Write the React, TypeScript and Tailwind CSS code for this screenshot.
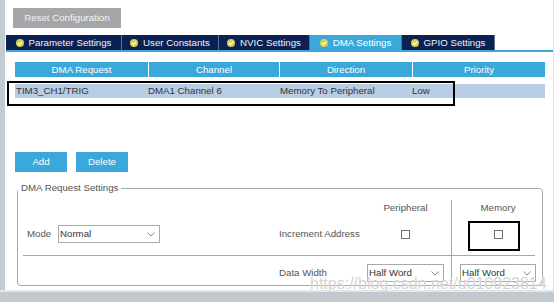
import React from "react";

// ── Small pieces ─────────────────────────────────────────────────────

const TABS = [
	{ label: "Parameter Settings", w: "w-[116px]", active: false },
	{ label: "User Constants", w: "w-[97px]", active: false },
	{ label: "NVIC Settings", w: "w-[91px]", active: false },
	{ label: "DMA Settings", w: "w-[92px]", active: true },
	{ label: "GPIO Settings", w: "w-[93px]", active: false },
];

function CheckDot() {
	return (
		<svg width="8" height="8" viewBox="0 0 8 8" className="shrink-0">
			<circle cx="4" cy="4" r="4" fill="#dad44b" />
			<path d="M2 4.1 L3.4 5.4 L6 2.8" stroke="#fff" strokeWidth="1.2" fill="none" />
		</svg>
	);
}

function Select({ value, w }: { value: string; w: string }) {
	return (
		<div className={`${w} flex h-[18px] items-center justify-between border border-[#a9a9a9] bg-white pl-[1px] pr-[4px] text-[#333]`}>
			<span>{value}</span>
			<svg width="8" height="5" viewBox="0 0 8 5">
				<path d="M0.5 0.5 L4 4 L7.5 0.5" stroke="#7a7a7a" strokeWidth="0.9" fill="none" />
			</svg>
		</div>
	);
}

function Checkbox() {
	return <div className="h-[9px] w-[9px] border border-[#707070] bg-white" />;
}

// ── Main Page ────────────────────────────────────────────────────────

export default function App() {
	return (
		<div className="relative flex h-[302px] w-[554px] flex-col overflow-hidden bg-white font-['Liberation_Sans',Arial,sans-serif] text-[9.7px] leading-[12px]">
			<div className="flex min-h-0 flex-1">
				{/* left frame */}
				<div className="w-[5px] bg-[#c3cbd0]" />

				<div className="relative flex flex-1 flex-col border-r border-[#dde2e5]">
					{/* Reset */}
					<div className="ml-[8px] mt-[8px] flex h-[20px] w-[108px] items-center justify-center bg-[#a3a7aa] text-[#f4f4f4]">
						Reset Configuration
					</div>

					{/* Tabs */}
					<div className="ml-[1px] mt-[7px] flex h-[15px]">
						{TABS.map((t) => (
							<div
								key={t.label}
								className={`${t.w} flex items-center justify-center gap-[5px] border-r border-[#5d6f8c] ${
									t.active ? "bg-[#3ba8db] text-white" : "bg-[#0b2153] text-[#eef2f8]"
								}`}
							>
								<CheckDot />
								<span>{t.label}</span>
							</div>
						))}
					</div>
					<div className="ml-[1px] h-[2px] bg-[#3aa8db]" />

					{/* Table */}
					<div className="ml-[10px] mt-[10px] flex h-[15px] gap-[1px] text-white">
						<div className="flex w-[133px] items-center justify-center bg-[#3aa8db]">DMA Request</div>
						<div className="flex w-[130px] items-center justify-center bg-[#3aa8db]">Channel</div>
						<div className="flex w-[132px] items-center justify-center bg-[#3aa8db]">Direction</div>
						<div className="flex w-[132px] items-center justify-center bg-[#3aa8db]">Priority</div>
					</div>
					<div className="ml-[10px] mt-[7px] flex h-[14px] w-[530px] items-center bg-[#b8cce4] text-[#333]">
						<div className="w-[133px] pl-[1px]">TIM3_CH1/TRIG</div>
						<div className="w-[132px]">DMA1 Channel 6</div>
						<div className="w-[132px]">Memory To Peripheral</div>
						<div>Low</div>
					</div>
					<div className="absolute left-[2px] top-[81px] h-[25px] w-[448px] border-2 border-black" />

					{/* Buttons */}
					<div className="ml-[10px] mt-[54px] flex gap-[9px] text-white">
						<div className="flex h-[20px] w-[52px] items-center justify-center bg-[#3aa8db]">Add</div>
						<div className="flex h-[20px] w-[52px] items-center justify-center bg-[#3aa8db]">Delete</div>
					</div>

					{/* DMA Request Settings */}
					<fieldset className="ml-[12px] mt-[10px] w-[526px] rounded-[4px] border border-[#a8a8a8] text-[#555]">
						<legend className="ml-[0px] pl-[3px] pr-[3px] leading-[12px]">DMA Request Settings</legend>

						<div className="mt-[6px] flex h-[16px]">
							<div className="flex w-[433px]">
								<div className="ml-[349px] flex w-[77px] items-center justify-center">Peripheral</div>
							</div>
							<div className="flex w-[91px] border-l border-[#8faad8]">
								<div className="ml-[8px] flex w-[76px] items-center justify-center">Memory</div>
							</div>
						</div>

						<div className="flex h-[39px]">
							<div className="flex w-[433px] pt-[9px]">
								<div className="flex h-[18px] w-[40px] items-center pl-[9px]">Mode</div>
								<Select value="Normal" w="w-[102px]" />
								<div className="ml-[119px] flex h-[18px] w-[88px] items-center">Increment Address</div>
								<div className="flex h-[18px] w-[77px] items-center justify-center">
									<Checkbox />
								</div>
							</div>
							<div className="relative flex w-[91px] border-l border-[#8faad8] pt-[9px]">
								<div className="ml-[8px] flex h-[18px] w-[76px] items-center justify-center">
									<Checkbox />
								</div>
								<div className="absolute left-[16px] top-[5px] h-[30px] w-[52px] border-2 border-black" />
							</div>
						</div>

						<div className="flex h-[1px]">
							<div className="w-[433px] pl-[5px]">
								<div className="h-[1px] bg-[#8faad8]" />
							</div>
							<div className="w-[91px] border-l border-[#8faad8]">
								<div className="h-[1px] w-[83px] bg-[#8faad8]" />
							</div>
						</div>

						<div className="flex h-[29px]">
							<div className="flex w-[433px] pt-[8px]">
								<div className="ml-[261px] flex h-[18px] w-[88px] items-center">Data Width</div>
								<Select value="Half Word" w="w-[77px]" />
							</div>
							<div className="flex w-[91px] border-l border-[#8faad8] pt-[8px]">
								<div className="ml-[8px]">
									<Select value="Half Word" w="w-[76px]" />
								</div>
							</div>
						</div>
					</fieldset>
				</div>
			</div>

			{/* bottom frame */}
			<div className="h-[12px] border-t-2 border-[#e3e7e9] bg-[#c1c9ce]" />

			{/* watermark */}
			<div className="pointer-events-none absolute left-[310px] top-[276px] text-[16px] leading-[16px] text-[#c9c9c9]/80 [text-shadow:0_0_1px_#ffffff]">
				https://blog.csdn.net/u010923814
			</div>
		</div>
	);
}
